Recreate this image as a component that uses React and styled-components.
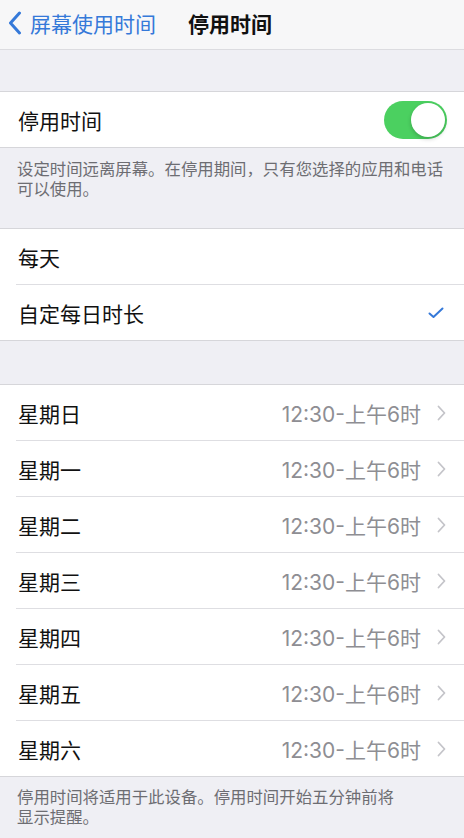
import React, { useState } from "react";
import styled, { createGlobalStyle } from "styled-components";

const GlobalStyle = createGlobalStyle`
  html, body {
    margin: 0;
    padding: 0;
    background: #efeff4;
  }
  body {
    font-family: "Noto Sans CJK SC", "Noto Sans", "Liberation Sans", sans-serif;
    -webkit-font-smoothing: antialiased;
  }
`;

const Screen = styled.div`
  width: 464px;
  min-height: 838px;
  background: #efeff4;
  display: flex;
  flex-direction: column;
`;

const NavBar = styled.header`
  height: 49px;
  background: #f7f7f8;
  border-bottom: 1px solid #dcdce0;
  display: flex;
  align-items: center;
  padding: 0 0 3px 8px;
  box-sizing: border-box;
  height: 50px;
`;

const BackButton = styled.button`
  display: flex;
  align-items: center;
  gap: 8px;
  border: 0;
  background: none;
  padding: 0;
  color: #3579d9;
  font: inherit;
  font-size: 21px;
  cursor: pointer;
`;

const NavTitle = styled.h1`
  margin: 0 0 0 32px;
  font-size: 21px;
  font-weight: 700;
  color: #111;
`;

const Gap = styled.div`
  height: ${(p) => p.$h}px;
`;

const Group = styled.section`
  background: #fff;
  border-top: 1px solid #d6d6da;
  border-bottom: 1px solid #d6d6da;
`;

const Row = styled.div`
  height: 55px;
  display: flex;
  align-items: center;
  padding: 0 18px 0 18px;
  position: relative;
  & + & {
    border-top: 1px solid #dedee2;
  }
  & + &::before {
    content: "";
    position: absolute;
    top: -1px;
    left: 0;
    width: 16px;
    height: 1px;
    background: #fff;
  }
`;

const Label = styled.span`
  flex: 1;
  font-size: 21px;
  color: #111;
  padding-top: 1px;
`;

const Value = styled.span`
  font-family: "Inter", "Noto Sans CJK SC", sans-serif;
  font-size: 21px;
  color: #8e8e93;
  margin-right: 16px;
  padding-top: 1px;
`;

const Footer = styled.p`
  margin: 0;
  padding: ${(p) => p.$pad};
  font-size: 16.4px;
  line-height: 20px;
  color: #6d6d72;
  & span {
    display: block;
    height: 20px;
    overflow: visible;
  }
`;

const SwitchTrack = styled.button`
  width: 63px;
  height: 38px;
  border-radius: 19px;
  border: 0;
  padding: 0;
  margin-right: -1px;
  background: ${(p) => (p.$on ? "#4bd060" : "#e5e5ea")};
  position: relative;
  cursor: pointer;
`;

const SwitchKnob = styled.span`
  position: absolute;
  top: 2px;
  left: ${(p) => (p.$on ? "27px" : "2px")};
  width: 34px;
  height: 34px;
  border-radius: 50%;
  background: #fff;
  box-shadow: 0 2px 4px rgba(0, 0, 0, 0.2);
  transition: left 0.2s;
`;

const Chevron = () => (
  <svg width="9" height="16" viewBox="0 0 9 16" aria-hidden="true">
    <path d="M1.5 1.5 L7.5 8 L1.5 14.5" fill="none" stroke="#c4c4c9" strokeWidth="1.8" strokeLinecap="round" strokeLinejoin="round" />
  </svg>
);

const BackChevron = () => (
  <svg width="14" height="24" viewBox="0 0 14 24" aria-hidden="true">
    <path d="M11.5 2 L2.5 12 L11.5 22" fill="none" stroke="#3579d9" strokeWidth="3" strokeLinecap="round" strokeLinejoin="round" />
  </svg>
);

const Check = () => (
  <svg width="16" height="12" viewBox="0 0 16 12" aria-hidden="true" style={{ marginRight: 2 }}>
    <path d="M1.5 6.5 L5.5 10 L14.5 1.5" fill="none" stroke="#3579d9" strokeWidth="2" strokeLinecap="round" strokeLinejoin="round" />
  </svg>
);

const days = ["星期日", "星期一", "星期二", "星期三", "星期四", "星期五", "星期六"];

export default function App() {
  const [on, setOn] = useState(true);
  const [mode, setMode] = useState("custom");

  return (
    <Screen>
      <GlobalStyle />
      <NavBar>
        <BackButton>
          <BackChevron />
          屏幕使用时间
        </BackButton>
        <NavTitle>停用时间</NavTitle>
      </NavBar>

      <Gap $h={41} />

      <Group>
        <Row>
          <Label>停用时间</Label>
          <SwitchTrack $on={on} onClick={() => setOn(!on)}>
            <SwitchKnob $on={on} />
          </SwitchTrack>
        </Row>
      </Group>

      <Footer $pad="10px 17px 30px">
        <span>设定时间远离屏幕。在停用期间，只有您选择的应用和电话</span>
        <span>可以使用。</span>
      </Footer>

      <Group>
        <Row onClick={() => setMode("daily")}>
          <Label>每天</Label>
          {mode === "daily" && <Check />}
        </Row>
        <Row onClick={() => setMode("custom")}>
          <Label>自定每日时长</Label>
          {mode === "custom" && <Check />}
        </Row>
      </Group>

      <Gap $h={43} />

      <Group>
        {days.map((d) => (
          <Row key={d}>
            <Label>{d}</Label>
            <Value>12:30-上午6时</Value>
            <Chevron />
          </Row>
        ))}
      </Group>

      <Footer $pad="9px 17px 20px">
        <span>停用时间将适用于此设备。停用时间开始五分钟前将</span>
        <span>显示提醒。</span>
      </Footer>
    </Screen>
  );
}
